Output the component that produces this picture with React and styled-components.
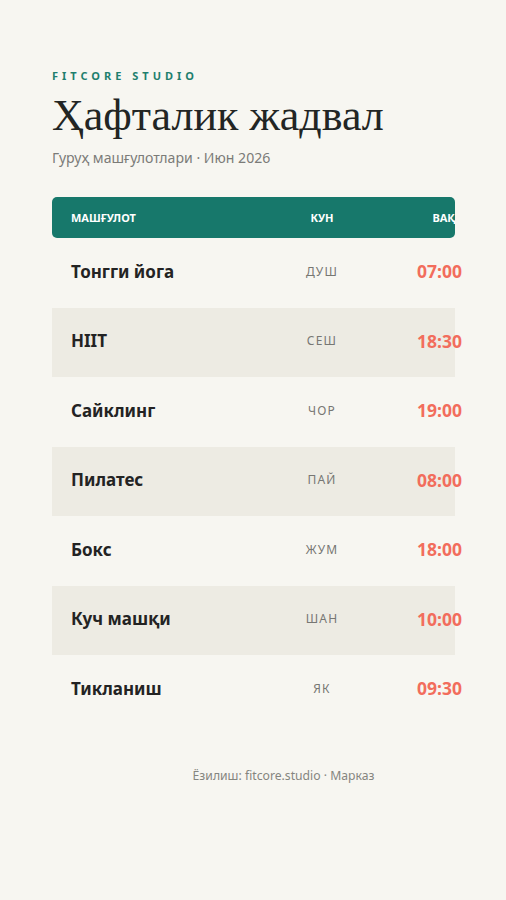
import React from "react";
import styled, { createGlobalStyle } from "styled-components";

const Global = createGlobalStyle`
  html, body { margin: 0; padding: 0; background: #f7f6f1; }
  body { font-family: "Noto Sans", "Open Sans", sans-serif; }
`;

const Page = styled.div`
  width: 506px;
  min-height: 900px;
  box-sizing: border-box;
  padding: 69px 51px 0 52px;
  background: #f7f6f1;
`;

const Brand = styled.div`
  font-size: 11px;
  font-weight: 700;
  letter-spacing: 4px;
  color: #1f7f6e;
  line-height: 14px;
`;

const Title = styled.h1`
  margin: 9px 0 0;
  font-family: "Liberation Serif", "Noto Serif", serif;
  font-weight: 400;
  font-size: 44px;
  line-height: 48px;
  color: #222524;
  white-space: nowrap;
`;

const Subtitle = styled.div`
  margin-top: 9px;
  font-size: 14.1px;
  line-height: 18px;
  color: #7b7b78;
`;

const Table = styled.div`
  margin-top: 30px;
  width: 403px;
`;

const Head = styled.div`
  display: grid;
  grid-template-columns: 204px 94px 93px;
  align-items: center;
  height: 41px;
  padding-left: 19px;
  background: #17786b;
  border-radius: 5px;
  overflow: hidden;
`;

const HeadCell = styled.div`
  font-size: 11px;
  font-weight: 700;
  color: #ffffff;
  text-align: ${(p) => p.$align || "left"};
  white-space: nowrap;
`;

const Row = styled.div`
  display: grid;
  grid-template-columns: 204px 94px 93px;
  align-items: center;
  height: 69.5px;
  padding-left: 19px;
  padding-bottom: 3px;
  box-sizing: border-box;
  background: ${(p) => (p.$striped ? "#edebe3" : "transparent")};
`;

const Name = styled.div`
  font-size: 17px;
  font-weight: 700;
  color: #232323;
  white-space: nowrap;
`;

const Day = styled.div`
  font-size: 12px;
  letter-spacing: 1.2px;
  color: #777773;
  text-align: center;
`;

const Time = styled.div`
  font-size: 17.5px;
  font-weight: 700;
  color: #f26d5c;
  text-align: right;
`;

const Footer = styled.div`
  margin-top: 42px;
  width: 403px;
  box-sizing: border-box;
  padding-left: 60px;
  text-align: center;
  font-size: 12.2px;
  color: #85857f;
`;

const rows = [
  ["Тонгги йога", "ДУШ", "07:00"],
  ["HIIT", "СЕШ", "18:30"],
  ["Сайклинг", "ЧОР", "19:00"],
  ["Пилатес", "ПАЙ", "08:00"],
  ["Бокс", "ЖУМ", "18:00"],
  ["Куч машқи", "ШАН", "10:00"],
  ["Тикланиш", "ЯК", "09:30"],
];

export default function App() {
  return (
    <Page>
      <Global />
      <Brand>FITCORE STUDIO</Brand>
      <Title>Ҳафталик жадвал</Title>
      <Subtitle>Гуруҳ машғулотлари · Июн 2026</Subtitle>
      <Table>
        <Head>
          <HeadCell>МАШҒУЛОТ</HeadCell>
          <HeadCell $align="center">КУН</HeadCell>
          <HeadCell $align="right">ВАҚТ</HeadCell>
        </Head>
        {rows.map(([n, d, t], i) => (
          <Row key={n} $striped={i % 2 === 1}>
            <Name>{n}</Name>
            <Day>{d}</Day>
            <Time>{t}</Time>
          </Row>
        ))}
      </Table>
      <Footer>Ёзилиш: fitcore.studio · Марказ</Footer>
    </Page>
  );
}
